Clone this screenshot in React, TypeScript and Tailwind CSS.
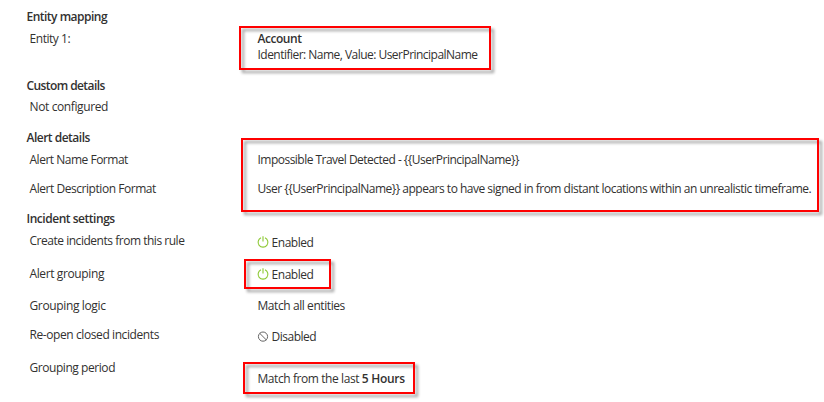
import type { ReactNode } from "react";

function Section({ title, className, children }: { title: string; className: string; children: ReactNode }) {
  return (
    <section>
      <h2 className={`pl-[26.5px] font-semibold ${className}`}>{title}</h2>
      {children}
    </section>
  );
}

function Row({ label, className, labelClass, children }: { label: string; className: string; labelClass: string; children?: ReactNode }) {
  return (
    <div className={`flex items-start pl-[29px] ${className}`}>
      <div className={`w-[228px] shrink-0 pl-[0.5px] ${labelClass}`}>{label}</div>
      <div className="relative pl-[0.5px] whitespace-nowrap">{children}</div>
    </div>
  );
}

function Highlight({ className }: { className: string }) {
  return <span className={`pointer-events-none absolute border-2 border-[#ff0000] drop-shadow-[3px_3px_1.5px_rgba(0,0,0,0.4)] ${className}`} />;
}

function PowerIcon() {
  return (
    <svg width="12" height="12" viewBox="0 0 12 12" fill="none" stroke="#8cc832" strokeWidth="1.1" className="mt-px -ml-[0.5px] mr-[2.5px]">
      <path d="M4 1.8A4.9 4.9 0 1 0 8 1.8M6 0.2V5.6" />
    </svg>
  );
}

function BlockedIcon() {
  return (
    <svg width="12" height="12" viewBox="0 0 12 12" fill="none" stroke="#666666" strokeWidth="1" className="mt-[2px] -ml-[0.5px] mr-[2.5px]">
      <circle cx="6" cy="5.6" r="4.6" />
      <path d="M2.7 2.3L9.3 8.9" />
    </svg>
  );
}

export default function App() {
  return (
    <main className="h-[402px] w-[824px] overflow-hidden bg-white pt-[9px] font-['Open_Sans','Noto_Sans',sans-serif] text-[12px] leading-4 text-[#323130]">
      <Section title="Entity mapping" className="h-[22px] tracking-[-0.51px]">
        <Row label="Entity 1:" className="h-[47px]" labelClass="tracking-[-0.45px]">
          <Highlight className="-left-[18px] -top-[5px] h-[44px] w-[252px]" />
          <div className="font-semibold tracking-[-0.46px]">Account</div>
          <div className="tracking-[-0.525px]">Identifier: Name, Value: UserPrincipalName</div>
        </Row>
      </Section>
      <Section title="Custom details" className="h-[21px] tracking-[-0.58px]">
        <Row label="Not configured" className="h-[31px]" labelClass="tracking-[-0.38px]" />
      </Section>
      <Section title="Alert details" className="h-[22px] tracking-[-0.5px]">
        <Row label="Alert Name Format" className="h-[29px]" labelClass="tracking-[-0.49px]">
          <Highlight className="-left-[16px] -top-[14px] h-[74px] w-[578px]" />
          <div className="tracking-[-0.52px]">{"Impossible Travel Detected - {{UserPrincipalName}}"}</div>
        </Row>
        <Row label="Alert Description Format" className="h-[30px]" labelClass="tracking-[-0.45px]">
          <div className="tracking-[-0.499px]">
            {"User {{UserPrincipalName}} appears to have signed in from distant locations within an unrealistic timeframe."}
          </div>
        </Row>
      </Section>
      <Section title="Incident settings" className="h-[22px] tracking-[-0.47px]">
        <Row label="Create incidents from this rule" className="h-[33px]" labelClass="tracking-[-0.475px]">
          <div className="flex pt-[2px] tracking-[-0.45px]"><PowerIcon />Enabled</div>
        </Row>
        <Row label="Alert grouping" className="h-[32px]" labelClass="tracking-[-0.38px]">
          <Highlight className="-left-[13px] -top-[7px] h-[30px] w-[87px]" />
          <div className="flex pt-px tracking-[-0.45px]"><PowerIcon />Enabled</div>
        </Row>
        <Row label="Grouping logic" className="h-[29px]" labelClass="tracking-[-0.36px]">
          <div className="tracking-[-0.42px]">Match all entities</div>
        </Row>
        <Row label="Re-open closed incidents" className="h-[33px]" labelClass="tracking-[-0.41px]">
          <div className="flex pt-[2px] tracking-[-0.48px]"><BlockedIcon />Disabled</div>
        </Row>
        <Row label="Grouping period" className="h-[42px]" labelClass="tracking-[-0.44px]">
          <Highlight className="-left-[14px] top-[2px] h-[32px] w-[172px]" />
          <div className="pt-[11px] tracking-[-0.42px]">
            Match from the last <span className="font-semibold tracking-[-0.27px]">5 Hours</span>
          </div>
        </Row>
      </Section>
    </main>
  );
}
